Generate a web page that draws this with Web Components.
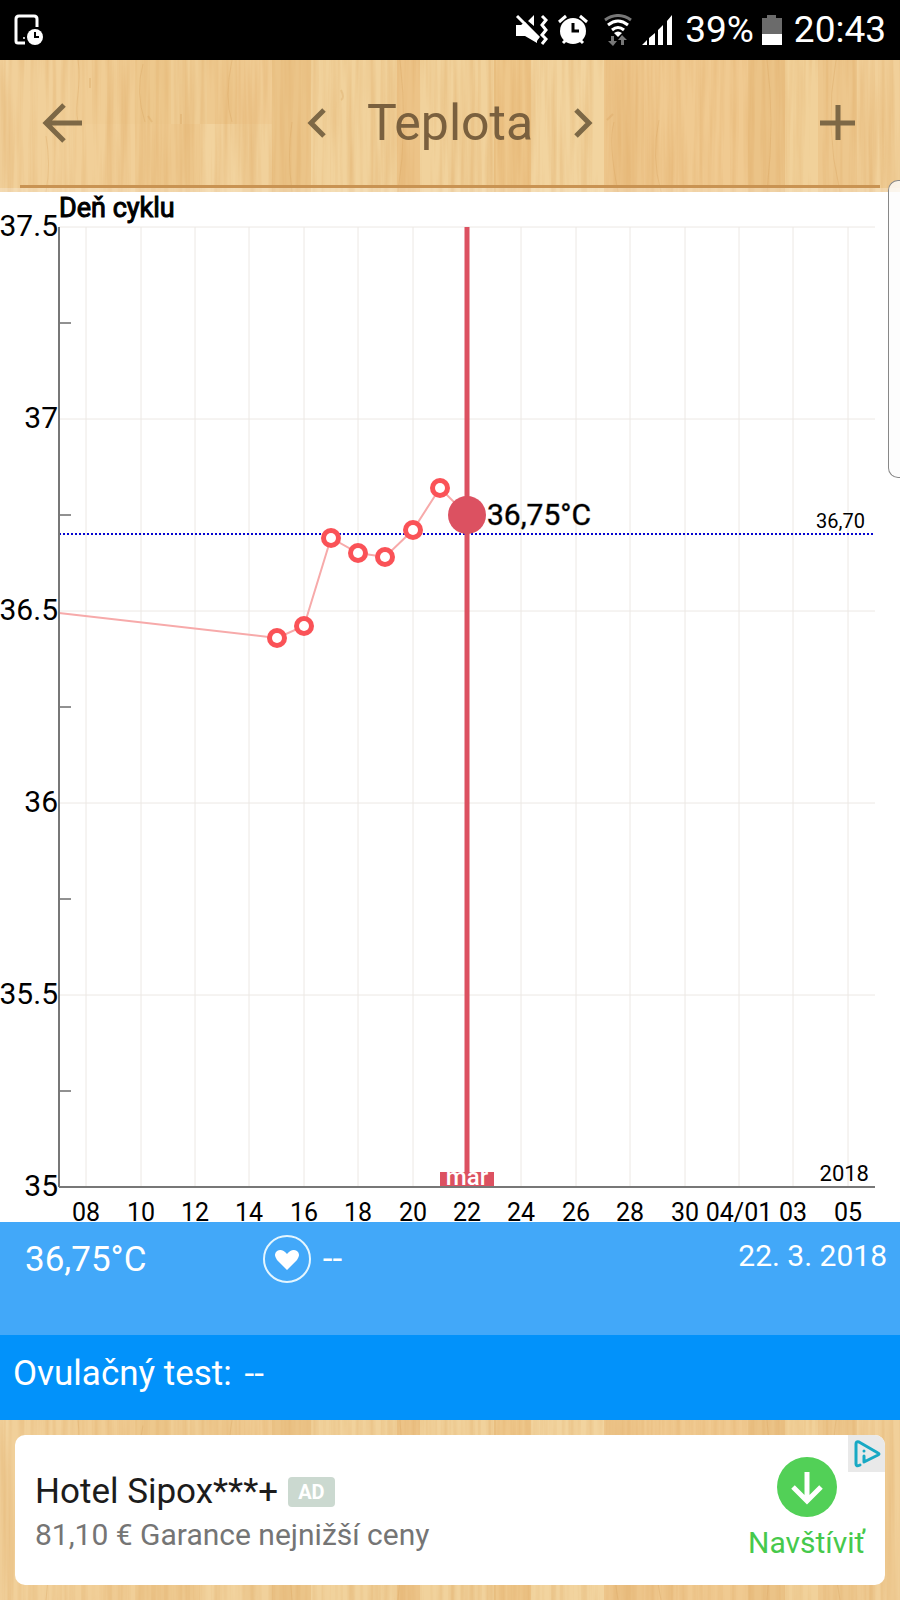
<!DOCTYPE html>
<html lang="sk">
<head>
<meta charset="utf-8">
<meta name="viewport" content="width=device-width, initial-scale=1">
<title>Teplota</title>
<style>
html, body { margin: 0; height: 100%; }
body { font-family: Roboto, "Liberation Sans", sans-serif; background: #fff; color: #000; }
</style>
</head>
<body>
<temperature-app></temperature-app>

<script>
const define = (name, html, extra = class extends HTMLElement {}) => {
  const template = document.createElement('template');
  template.innerHTML = html;
  customElements.define(name, class extends extra {
    constructor() {
      super();
      this.attachShadow({ mode: 'open' }).append(template.content.cloneNode(true));
    }
  });
};

/* Parquet backdrop: planks given as [x, width, colour], plus a fine vertical grain */
const planksTop = [
  [0, 12, '#f2d39f'], [12, 63, '#f1d09a'], [75, 60, '#f0cd95'], [135, 36, '#edc88d'], [171, 36, '#efcd95'],
  [207, 30, '#eec98f'], [237, 35, '#f0cc94'], [272, 39, '#ebc488'], [311, 86, '#f1d29c'],
  [397, 23, '#ecc387'], [420, 74, '#f1d29c'], [494, 37, '#eec78b'], [531, 73, '#f2d49f'],
  [604, 40, '#edc58a'], [644, 104, '#f0ca91'], [748, 37, '#ebc387'], [785, 33, '#f1d19a'],
  [818, 39, '#edc78d'], [857, 43, '#f1d09a']
];
const planksLow = [[75, 60, '#f1cf98'], [135, 65, '#eec98f'], [200, 72, '#f2d39e'], [237, 35, '#f1d19b']];
const rects = (list, y, h) => list.map(([x, w, c]) => `<rect x="${x}" y="${y}" width="${w}" height="${h}" fill="${c}"/>`).join('');
define('wood-surface', `
<style>
:host { display: block; position: relative; isolation: isolate; background: #f0cc92; }
svg { position: absolute; inset: 0; width: 100%; height: 100%; z-index: -1; }
</style>
<svg viewBox="0 0 900 132" preserveAspectRatio="none" aria-hidden="true">
  <defs>
    <filter id="grain" x="0" y="0" width="100%" height="100%" color-interpolation-filters="sRGB">
      <feTurbulence type="fractalNoise" baseFrequency="0.16 0.006" numOctaves="3" seed="8"/>
      <feColorMatrix values="0 0 0 0 .86  0 0 0 0 .64  0 0 0 0 .36  .8 0 0 0 -.3"/>
    </filter>
  </defs>
  ${rects(planksTop, 0, 132)}${rects(planksLow, 64, 68)}
  <rect width="900" height="132" filter="url(#grain)"/>
  <g fill="none" stroke="#d59e5b" stroke-opacity=".3">
    <path d="M78 0C82 24 74 44 78 62M232 0q-8 38 0 62M143 4q-8 28 2 58M400 0q8 66-2 132M495 0v132M292 62q-5 32 0 70M767 0q8 60 0 132M836 0q-12 66 4 132M614 62q-6 20 4 70M659 60q-8 36 2 72M46 76q5 28 0 56"/>
    <path d="M90 18v10M148 56l4 6M181 54v10M341 30q4 8 0 10M607 60l6-6" stroke-width="2"/>
  </g>
</svg>
<slot></slot>`);

define('status-bar', `
<style>
:host { display: flex; align-items: center; justify-content: space-between; height: 60px; padding: 0 14px 0 14px; background: #000; color: #fff; font-size: 37px; line-height: 60px; box-sizing: border-box; flex: none; }
.right { display: flex; align-items: center; }
svg { display: block; }
.mute { margin-right: 10px; } .alarm { margin-right: 16px; } .wifi { margin-right: 9px; } .bars { margin-right: 12px; }
.battery { margin: 0 12px 0 8px; }
</style>
<svg width="30" height="32" viewBox="0 0 30 32" fill="none" role="img" aria-label="Naplánované">
  <path d="M11 29H4q-2 0-2-2V5q0-3 3-3h15q3 0 3 3v8" stroke="#fff" stroke-width="3"/>
  <circle cx="10" cy="24" r="1" fill="#fff"/>
  <circle cx="21" cy="23" r="8" fill="#fff"/>
  <path d="M21 18v5h4" stroke="#000" stroke-width="2"/>
</svg>
<div class="right">
  <svg class="mute" width="33" height="32" viewBox="0 0 33 32" role="img" aria-label="Vibrácie">
    <path d="M1 11h5l4-3 14 16-2 3v2L10 22H1zM19 1v11l-6-5z" fill="#fff"/>
    <path d="M2 2l22 22" stroke="#fff" stroke-width="3"/>
    <path d="M27 2l4 4-4 5 4 5-4 5 4 4-4 5" stroke="#fff" stroke-width="3" fill="none"/>
  </svg>
  <svg class="alarm" width="30" height="32" viewBox="0 0 30 32" role="img" aria-label="Budík">
    <path d="M1 8l7-6M29 8l-7-6M5 29l5-5M25 29l-5-5" stroke="#fff" stroke-width="3"/>
    <circle cx="15" cy="17" r="13" fill="#fff"/><path d="M15 9v8h6" stroke="#000" stroke-width="3" fill="none"/>
  </svg>
  <svg class="wifi" width="28" height="32" viewBox="0 0 28 32" role="img" aria-label="Wi-Fi">
    <g fill="none" stroke-width="3"><path d="M1 6q13-9 26 0" stroke="#777"/><path d="M4 11q10-8 20 0M8 16q6-5 12 0" stroke="#fff"/></g>
    <path d="M10 19q4-3 8 0l-4 4z" fill="#fff"/>
    <path d="M7 22v5H4l5 5 4-5h-3v-5zM17 31v-5h-3l4-5 5 5h-3v5z" fill="#777"/>
  </svg>
  <svg class="bars" width="32" height="32" viewBox="0 0 32 32" fill="#fff" role="img" aria-label="Signál">
    <path d="M1 31l5-5v5zM8 24l6-5v12H8zM17 16l5-5v20h-5zM26 7l5-6v30h-5z"/>
  </svg>
  <span>39%</span>
  <svg class="battery" width="20" height="32" viewBox="0 0 20 32" aria-hidden="true">
    <path d="M5 1h9v3h6v16H0V4h5z" fill="#6b6b6b"/><path d="M0 20h20v11H0z" fill="#fff"/>
  </svg>
  <time>20:43</time>
</div>`);

define('app-header', `
<style>
:host { display: block; flex: none; }
.row { display: grid; grid-template-columns: 1fr auto 1fr; align-items: center; height: 125px; padding: 0 40px; }
nav { display: flex; align-items: center; gap: 38px; }
h1 { margin: 0; font-size: 50px; line-height: 60px; font-weight: 400; color: #7a603e; }
button { background: none; border: 0; padding: 0; display: block; }
.add { justify-self: end; }
svg { display: block; fill: none; stroke: #7d6846; stroke-width: 5; }
.rule { height: 3px; margin: 0 20px; background: #c99352; }
.pad { height: 4px; background: rgba(255,255,255,.25); }
</style>
<wood-surface>
  <div class="row">
    <button aria-label="Späť"><svg width="44" height="44" viewBox="0 0 44 44"><path d="M42 22H6M24 4L6 22l18 18"/></svg></button>
    <nav>
      <button aria-label="Predchádzajúci"><svg width="24" height="32" viewBox="0 0 24 32"><path d="M19 3L6 16l13 13"/></svg></button>
      <h1>Teplota</h1>
      <button aria-label="Nasledujúci"><svg width="24" height="32" viewBox="0 0 24 32"><path d="M5 3l13 13L5 29"/></svg></button>
    </nav>
    <button class="add" aria-label="Pridať"><svg width="44" height="44" viewBox="0 0 44 44"><path d="M22 4v35M4 22h35"/></svg></button>
  </div>
  <div class="rule"></div><div class="pad"></div>
</wood-surface>`);

/* Line chart of temperature by day; day 0 is 7 March, the axis spans 30 days */
define('temperature-chart', `
<style>
:host { display: block; flex: 1 1 600px; min-height: 600px; position: relative; z-index: 1; }
svg { display: block; overflow: visible; }
text { font-family: Roboto, "Liberation Sans", sans-serif; fill: #000; }
.y { font-size: 30px; text-anchor: end; } .x { font-size: 25px; text-anchor: middle; }
.heading { font-size: 27px; stroke: #000; stroke-width: 1px; }
.value { font-size: 30px; stroke: #000; stroke-width: 1px; stroke-opacity: .4; }
.limit { font-size: 20px; text-anchor: end; } .year { font-size: 22px; text-anchor: end; }
.month { font-size: 24px; font-weight: 500; fill: #fff; text-anchor: middle; }
</style>
<svg role="img" aria-label="Graf teploty"></svg>`, class extends HTMLElement {
  connectedCallback() {
    this.draw();
    this.observer = new ResizeObserver(() => this.draw());
    this.observer.observe(this);
  }
  disconnectedCallback() { this.observer.disconnect(); }
  draw() {
    const svg = this.shadowRoot.querySelector('svg');
    const W = this.clientWidth, H = this.clientHeight;
    if (!W || !H) return;
    const left = 59, right = W - 25, top = 35, bottom = H - 35;
    const X = d => Math.round(left + d * (right - left) / 30);
    const Y = t => Math.round(bottom - (t - 35) * (bottom - top) / 2.5);
    const line = (x1, y1, x2, y2, c, w = 1, more = '') =>
      `<line x1="${x1}" y1="${y1}" x2="${x2}" y2="${y2}" stroke="${c}" stroke-width="${w}" ${more}/>`;
    const text = (x, y, cls, s) => `<text x="${x}" y="${y}" class="${cls}">${s}</text>`;
    let out = '';
    for (let t = 35.5; t <= 37.5; t += .5) out += line(left, Y(t), right, Y(t), '#ece8e4');
    const days = ['08', '10', '12', '14', '16', '18', '20', '22', '24', '26', '28', '30', '04/01', '03', '05'];
    days.forEach((s, i) => {
      const x = X(1 + 2 * i);
      out += line(x, top, x, bottom, '#ece8e4') + text(x, bottom + 34, 'x', s);
    });
    for (let t = 35.25; t < 37.5; t += .5) out += line(left, Y(t), left + 12, Y(t), '#222');
    for (let t = 35; t <= 37.5; t += .5) out += text(left - 1, Y(t) + 9, 'y', t);
    const data = [[0, 36.495], [8, 36.43], [9, 36.46], [10, 36.69], [11, 36.65], [12, 36.64], [13, 36.71], [14, 36.82], [15, 36.75]];
    out += line(left, Y(36.7), right, Y(36.7), '#0606d0', 2, 'stroke-dasharray="2 2"');
    out += `<polyline points="${data.map(([d, t]) => X(d) + ',' + Y(t)).join(' ')}" fill="none" stroke="#f7aaaa" stroke-width="2"/>`;
    data.slice(1, -1).forEach(([d, t]) => {
      out += `<circle cx="${X(d)}" cy="${Y(t)}" r="10" fill="#fa5257"/><circle cx="${X(d)}" cy="${Y(t)}" r="5" fill="#fff"/>`;
    });
    const now = X(15);
    out += line(now, top, now, bottom, '#dc5161', 5);
    out += `<circle cx="${now}" cy="${Y(36.75)}" r="19" fill="#dc5161"/>`;
    out += text(now + 20, Y(36.75) + 10, 'value', '36,75°C');
    out += `<clipPath id="tag"><rect x="${now - 27}" y="${bottom - 15}" width="54" height="15"/></clipPath>`;
    out += `<rect x="${now - 27}" y="${bottom - 15}" width="54" height="15" fill="#dc5161"/><g clip-path="url(#tag)">${text(now, bottom - 2, 'month', 'mar')}</g>`;
    out += line(left, top, left, bottom, '#777', 2) + line(left, bottom, right, bottom, '#777', 2);
    out += text(right - 10, Y(36.7) - 6, 'limit', '36,70') + text(right - 6, bottom - 6, 'year', '2018');
    out += text(left, 25, 'heading', 'Deň cyklu');
    svg.setAttribute('width', W);
    svg.setAttribute('height', H);
    svg.innerHTML = out;
  }
});

define('day-summary', `
<style>
:host { display: block; flex: none; color: #fff; font-size: 35px; line-height: 42px; }
.day { display: grid; grid-template-columns: 4fr 5fr 6fr; box-sizing: border-box; height: 113px; padding: 12px 13px 0 25px; background: #42a8f9; align-items: start; }
.day > * { display: flex; align-items: center; height: 52px; }
.day .love { gap: 12px; height: 50px; padding-left: 8px; }
.love svg { flex: none; }
.day time { justify-content: flex-end; font-size: 30px; height: 44px; }
.test { background: #0292fa; height: 85px; padding: 18px 13px; box-sizing: border-box; }
.test b { font-weight: 400; margin-left: 4px; }
</style>
<div class="day">
  <span>36,75°C</span>
  <span class="love"><svg width="48" height="48" viewBox="0 0 48 48" role="img" aria-label="Intimita">
    <circle cx="24" cy="24" r="23" fill="none" stroke="#e4f6ff" stroke-width="2"/>
    <path d="M24 35L14 25q-4-6 0-9 5-3 10 3 5-6 10-3 4 3 0 9z" fill="#fff"/></svg>--</span>
  <time datetime="2018-03-22">22. 3. 2018</time>
</div>
<div class="test">Ovulačný test: <b>--</b></div>`);

define('ad-banner', `
<style>
:host { display: block; flex: none; }
.frame { padding: 15px; }
.card { position: relative; display: flex; justify-content: space-between; box-sizing: border-box; height: 150px; padding: 22px 20px 0 20px; background: #fff; border-radius: 10px; overflow: hidden; }
a { color: inherit; text-decoration: none; }
.head { display: flex; align-items: center; gap: 10px; font-size: 35px; line-height: 42px; color: #1c1c1c; margin-top: 14px; }
.tag { background: #cbd9d0; color: #fff; font-size: 20px; line-height: 30px; font-weight: 700; border-radius: 4px; padding: 0 10px; }
p { margin: 0; font-size: 30px; line-height: 44px; color: #757575; }
.visit { display: flex; flex-direction: column; align-items: center; font-size: 30px; line-height: 34px; color: #46c94c; gap: 9px; }
svg { display: block; }
.choices { position: absolute; top: 0; right: 0; background: #e9e9e9; }
</style>
<wood-surface><div class="frame"><div class="card">
  <div>
    <div class="head"><a href="#hotel">Hotel Sipox***+</a><span class="tag">AD</span></div>
    <p>81,10 € Garance nejnižší ceny</p>
  </div>
  <a class="visit" href="#visit">
    <svg width="60" height="60" viewBox="0 0 60 60" aria-hidden="true"><circle cx="30" cy="30" r="30" fill="#52d057"/><path d="M30 15v29M16 30l14 14 14-14" fill="none" stroke="#fff" stroke-width="5"/></svg>
    <span>Navštíviť</span>
  </a>
  <a class="choices" href="#adchoices" aria-label="AdChoices">
    <svg width="37" height="37" viewBox="0 0 37 37" fill="none" stroke="#18a9c4" stroke-width="3" stroke-linecap="round" stroke-linejoin="round"><path d="M16 21v6l14-7q2-1 0-2L11 7q-3-1-3 2v20q0 3 4 1M16 16v0"/></svg>
  </a>
</div></div></wood-surface>`);

define('edge-handle', `
<style>
:host { display: block; position: absolute; z-index: 2; right: 0; top: 180px; width: 12px; height: 298px; box-sizing: border-box; border: 1px solid #888; border-right: 0; border-radius: 10px 0 0 10px; background: rgba(252,252,252,.8); }
</style>`);

define('temperature-app', `
<style>
:host { display: flex; flex-direction: column; min-height: 100vh; position: relative; overflow: hidden; }
</style>
<status-bar></status-bar>
<app-header></app-header>
<temperature-chart></temperature-chart>
<day-summary></day-summary>
<ad-banner></ad-banner>
<edge-handle></edge-handle>`);
</script>
</body>
</html>
